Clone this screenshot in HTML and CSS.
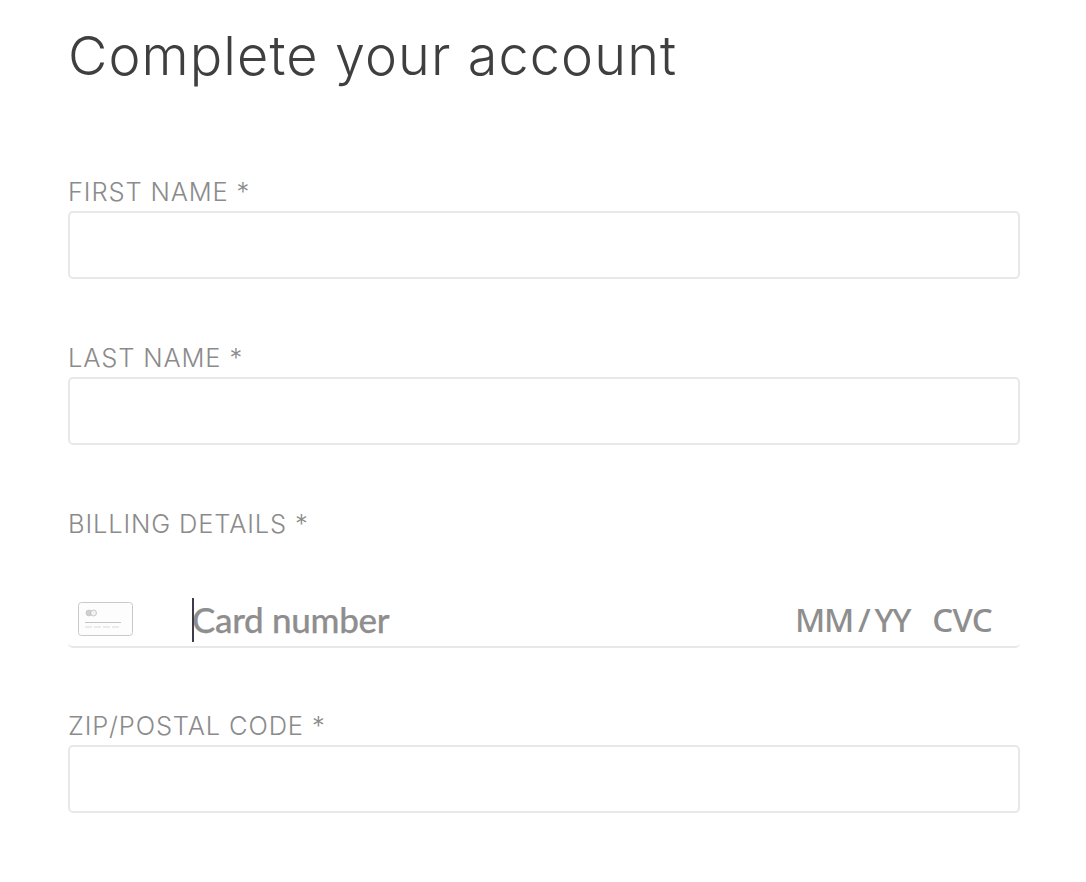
FILE: index.html
```html
<!DOCTYPE html>
<html lang="en">
<head>
    <meta charset="UTF-8">
    <title>Complete your account</title>
    <link rel="stylesheet" href="styles.css">
</head>
<body>
<div class="page">
    <h1 class="title">Complete your account</h1>

    <div class="field field_first">
        <label class="label">FIRST NAME *</label>
        <div class="box"></div>
    </div>
    <div class="field field_last">
        <label class="label">LAST NAME *</label>
        <div class="box"></div>
    </div>
    <div class="field field_billing">
        <label class="label">BILLING DETAILS *</label>
        <div class="card">
            <svg class="card_icon" width="56" height="34" viewBox="0 0 56 34" fill="none">
                <rect x="0.5" y="0.5" width="54" height="33" rx="3" stroke="#c9c9c9" fill="#fdfdfd"/>
                <circle cx="11" cy="11" r="3" fill="#d0d0d0" stroke="#bdbdbd" stroke-width="0.6"/>
                <circle cx="15.5" cy="11" r="3" fill="#f2f2f2" stroke="#b5b5b5" stroke-width="0.7"/>
                <path d="M7 20.5H43" stroke="#c4c4c4"/>
                <path d="M7 25H43" stroke="#d8d8d8" stroke-dasharray="7 2"/>
            </svg>
            <div class="card_number"><span class="caret"></span>Card number</div>
            <div class="card_date">MM / YY</div>
            <div class="card_cvc">CVC</div>
        </div>
    </div>
    <div class="field field_zip">
        <label class="label">ZIP/POSTAL CODE *</label>
        <div class="box"></div>
    </div>
</div>
</body>
</html>
```

FILE: styles.css
```css
* {
    box-sizing: border-box;
}

body {
    margin: 0;
    background: #fff;
    font-family: "Inter", "Open Sans", sans-serif;
}

.page {
    padding: 26px 66px 0 68px;
}

.title {
    margin: 0 0 91px;
    font-size: 54px;
    line-height: 60px;
    font-weight: 300;
    letter-spacing: 1.1px;
    color: #3f3f3f;
}

.label {
    display: block;
    font-size: 25.5px;
    line-height: 29px;
    font-weight: 300;
    letter-spacing: 0.85px;
    color: #8b8b8b;
}

.box {
    margin-top: 5px;
    height: 68px;
    border: 2px solid #e8e8e8;
    border-radius: 5px;
}

.field {
    margin-bottom: 64px;
}

.field_billing {
    margin-bottom: 63px;
}

.card {
    display: flex;
    align-items: center;
    margin-top: 44px;
    height: 66px;
    padding: 10px 28px 0 10px;
    border-bottom: 2px solid #e8e8e8;
    border-radius: 0 0 5px 5px;
    font-family: "Noto Sans", sans-serif;
    font-size: 33px;
    font-weight: 500;
    color: #8e8e8e;
}

.card_icon {
    flex: none;
}

.card_number {
    flex: 1;
    position: relative;
    margin-left: 58px;
    font-family: "Lato", "Noto Sans", sans-serif;
    font-size: 35px;
    letter-spacing: -0.3px;
    -webkit-text-stroke: 0.25px #8e8e8e;
}

.caret {
    position: absolute;
    left: 0;
    top: 0;
    width: 2px;
    height: 44px;
    background: #3c3c4c;
}

.card_date {
    letter-spacing: -1.4px;
    word-spacing: -2px;
}

.card_cvc {
    margin-left: 22px;
    letter-spacing: -0.7px;
}
```
